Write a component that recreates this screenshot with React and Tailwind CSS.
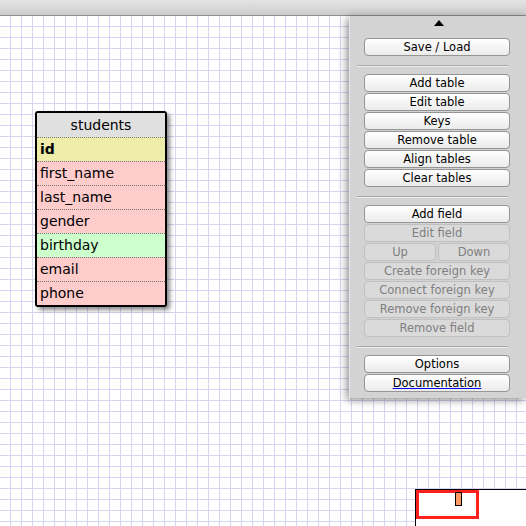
import React from 'react'

const fields = [
  { name: 'id', bg: 'bg-[#eeeeaa]', bold: true },
  { name: 'first_name', bg: 'bg-[#ffcccc]' },
  { name: 'last_name', bg: 'bg-[#ffcccc]' },
  { name: 'gender', bg: 'bg-[#ffcccc]' },
  { name: 'birthday', bg: 'bg-[#ccffcc]' },
  { name: 'email', bg: 'bg-[#ffcccc]' },
  { name: 'phone', bg: 'bg-[#ffcccc]' },
]

const Btn = ({ children, disabled, link }) => (
  <button
    className={`block h-[18px] w-full rounded-[4px] border text-[11.5px] leading-[16px] ${
      disabled
        ? 'border-[#c0c0c0] bg-[#dadada] text-[#808080]'
        : 'border-[#959595] bg-gradient-to-b from-white to-[#ebebeb] text-black'
    }`}
  >
    {link ? <span className="underline decoration-[#0000ee]">{children}</span> : children}
  </button>
)

const Sep = () => <div className="mb-[8px] ml-[-7px] mr-[2px] mt-[9px] h-px bg-[#a8a8a8] shadow-[0_1px_0_#ececec]" />

const App = () => {
  return (
    <div className="relative h-[526px] w-[526px] overflow-hidden font-['DejaVu_Sans',sans-serif]">
      {/* top bar */}
      <div className="h-[16px] border-b border-[#8e8e8e] bg-gradient-to-b from-[#e4e4e4] to-[#cdcdcd]" />

      {/* canvas */}
      <div className="relative h-[510px] bg-white bg-[linear-gradient(to_right,#d4d4f3_1px,transparent_1px),linear-gradient(to_bottom,#d4d4f3_1px,transparent_1px)] bg-[size:11px_11px] bg-[position:10px_10px]">
        {/* table node */}
        <div className="absolute left-[35px] top-[95px] w-[132px] overflow-hidden rounded-[3px] border-2 border-black bg-white shadow-[3px_3px_4px_rgba(0,0,0,0.45)]">
          <div className="h-[24px] bg-[#e0e0e0] text-center text-[14px] leading-[24px] text-black">students</div>
          {fields.map((f) => (
            <div
              key={f.name}
              className={`h-[24px] border-t border-dotted border-[#777] px-[3px] text-[14px] leading-[22px] text-black ${f.bg} ${f.bold ? 'font-bold' : ''}`}
            >
              {f.name}
            </div>
          ))}
        </div>

        {/* side panel */}
        <div className="absolute left-[349px] top-0 flex w-[177px] flex-col border-l border-[#e6e6e6] bg-[#d3d3d3] pb-[6px] pl-[14px] pr-[16px] pt-[4px] shadow-[-2px_2px_8px_rgba(0,0,0,0.45)]">
          <div className="flex h-[6px] justify-center pl-[3px]">
            <svg width="10" height="6" viewBox="0 0 10 6" className="block">
              <polygon points="5,0 10,6 0,6" fill="#000" />
            </svg>
          </div>
          <div className="mt-[12px] flex flex-col">
            <Btn>Save / Load</Btn>
          </div>
          <Sep />
          <div className="flex flex-col gap-px">
            <Btn>Add table</Btn>
            <Btn>Edit table</Btn>
            <Btn>Keys</Btn>
            <Btn>Remove table</Btn>
            <Btn>Align tables</Btn>
            <Btn>Clear tables</Btn>
          </div>
          <Sep />
          <div className="flex flex-col gap-px">
            <Btn>Add field</Btn>
            <Btn disabled>Edit field</Btn>
            <div className="flex gap-[2px]">
              <Btn disabled>Up</Btn>
              <Btn disabled>Down</Btn>
            </div>
            <Btn disabled>Create foreign key</Btn>
            <Btn disabled>Connect foreign key</Btn>
            <Btn disabled>Remove foreign key</Btn>
            <Btn disabled>Remove field</Btn>
          </div>
          <Sep />
          <div className="flex flex-col gap-px">
            <Btn>Options</Btn>
            <Btn link>Documentation</Btn>
          </div>
        </div>

        {/* minimap */}
        <div className="absolute left-[415px] top-[473px] h-[40px] w-[120px] border border-black bg-white">
          <div className="absolute left-0 top-0 h-[29px] w-[63px] border-[3px] border-[#ff2020]" />
          <div className="absolute left-[39px] top-[2px] h-[14px] w-[7px] border border-black bg-[#ff9966]" />
        </div>
      </div>
    </div>
  )
}

export default App
